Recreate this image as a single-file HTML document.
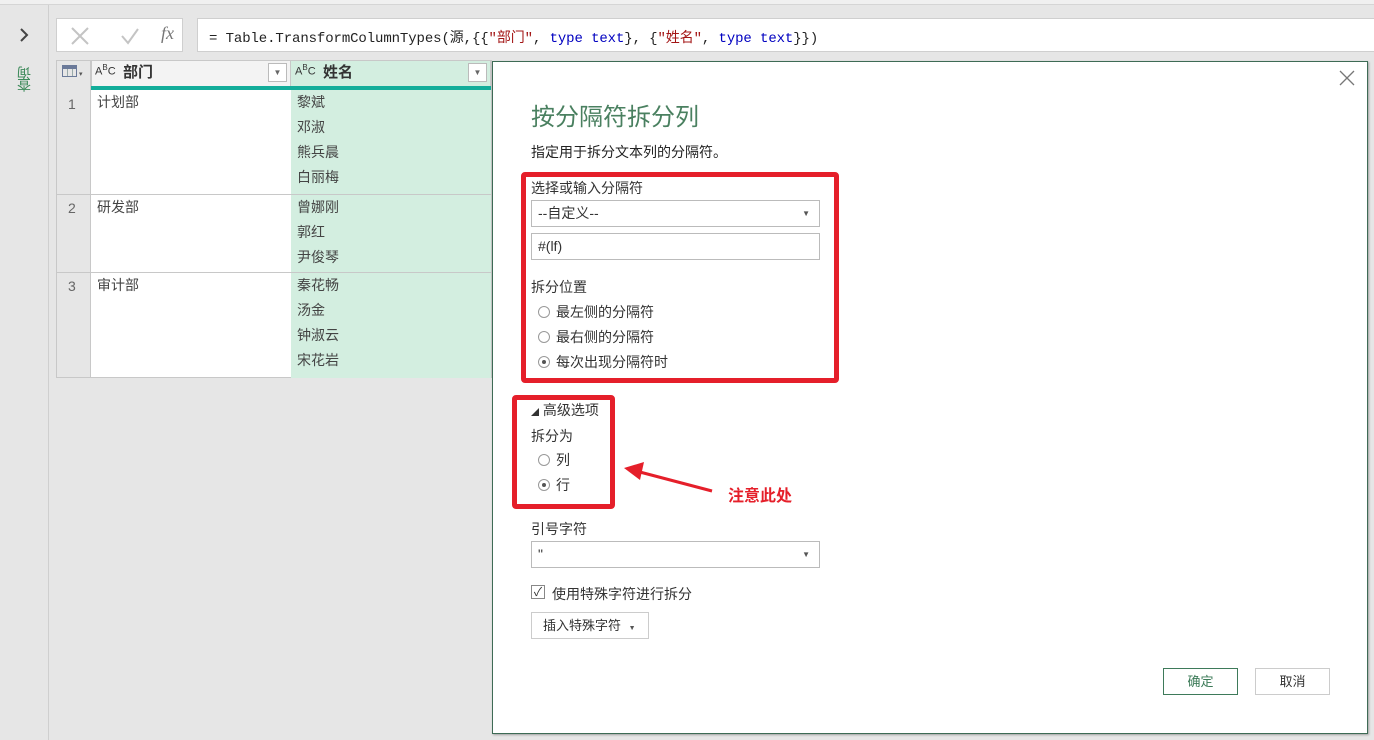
<!DOCTYPE html>
<html><head><meta charset="utf-8"><style>
*{margin:0;padding:0;box-sizing:border-box}
body{width:1374px;height:740px;overflow:hidden;background:#e6e6e6;font-family:"Liberation Sans","Noto Sans CJK SC",sans-serif;font-size:14px;color:#333;position:relative}
.a{position:absolute}
.cell{position:absolute;line-height:25px;font-size:14px;color:#444}
.radio{display:inline-block;width:12px;height:12px;border:1px solid #999;border-radius:50%;vertical-align:-1px;margin-right:6px;position:relative;background:#fff}
.radio.on::after{content:"";position:absolute;left:3px;top:3px;width:4px;height:4px;border-radius:50%;background:#555}
.red{position:absolute;border:5px solid #e51f2a;border-radius:4px}
</style></head><body>
<div class="a" style="left:0;top:0;width:1374px;height:5px;background:#f0f0f0;border-bottom:1px solid #d5d5d5"></div>
<div class="a" style="left:0;top:5px;width:49px;height:735px;background:#e6e6e6;border-right:1px solid #cfcfcf"></div>
<svg class="a" style="left:18px;top:27px" width="12" height="16"><path d="M3 2 L9 8 L3 14" stroke="#444" stroke-width="2" fill="none"/></svg>
<div class="a" style="left:14px;top:68px;width:20px;font-size:14px;color:#3d8a5a;writing-mode:vertical-rl;transform:rotate(180deg);letter-spacing:-2px">查询</div>
<!-- formula bar -->
<div class="a" style="left:56px;top:18px;width:127px;height:34px;background:#fff;border:1px solid #cfcfcf"></div>
<svg class="a" style="left:70px;top:26px" width="120" height="20"><path d="M2 2 L18 18 M18 2 L2 18" stroke="#c4c4c4" stroke-width="2"/><path d="M52 10 L58 17 L68 3" stroke="#c4c4c4" stroke-width="2" fill="none"/></svg>
<div class="a" style="left:161px;top:23px;font-size:18px;color:#777;font-family:'Liberation Serif',serif;font-style:italic">fx</div>
<div class="a" style="left:197px;top:18px;width:1177px;height:34px;background:#fff;border:1px solid #cfcfcf;border-right:none"></div>
<div class="a" style="left:209px;top:27px;font-family:'Liberation Mono','Noto Sans CJK SC',monospace;font-size:14px;color:#222;white-space:pre;letter-spacing:-0.1px">= Table.TransformColumnTypes(源,{{<span style="color:#a31515">"部门"</span>, <span style="color:#0000c0">type text</span>}, {<span style="color:#a31515">"姓名"</span>, <span style="color:#0000c0">type text</span>}})</div>
<!-- table -->
<div class="a" style="left:56px;top:60px;width:436px;height:318px;background:#fff;border:1px solid #c8c8c8"></div>
<div class="a" style="left:56px;top:60px;width:35px;height:318px;background:#e6e6e6;border:1px solid #c8c8c8"></div>
<div class="a" style="left:91px;top:60px;width:200px;height:27px;background:#f3f3f3;border:1px solid #c8c8c8"></div>
<div class="a" style="left:291px;top:60px;width:200px;height:318px;background:#d3eee0"></div>
<div class="a" style="left:291px;top:60px;width:200px;height:27px;border:1px solid #c8c8c8;border-left:none"></div>
<div class="a" style="left:91px;top:86px;width:400px;height:4px;background:#13ad9a"></div>
<div class="a" style="left:62px;top:65px;width:15px;height:12px;border:1px solid #6b7a99;background:linear-gradient(#6b7a99 0 3px,transparent 3px),repeating-linear-gradient(90deg,transparent 0 4px,#9aa 4px 5px)"></div>
<div class="a" style="left:79px;top:70px;font-size:7px;color:#555">▾</div>
<div class="a" style="left:95px;top:63px;font-size:11px;color:#333">A<sup style="font-size:8px">B</sup>C</div>
<div class="a" style="left:123px;top:61px;font-size:15px;font-weight:bold;color:#333">部门</div>
<div class="a" style="left:268px;top:63px;width:19px;height:19px;border:1px solid #bbb;background:#fff;font-size:8px;text-align:center;line-height:17px;color:#666">▼</div>
<div class="a" style="left:295px;top:63px;font-size:11px;color:#333">A<sup style="font-size:8px">B</sup>C</div>
<div class="a" style="left:323px;top:61px;font-size:15px;font-weight:bold;color:#333">姓名</div>
<div class="a" style="left:468px;top:63px;width:19px;height:19px;border:1px solid #bbb;background:#fff;font-size:8px;text-align:center;line-height:17px;color:#666">▼</div>
<div class="a" style="left:56px;top:194px;width:436px;height:1px;background:#c8c8c8"></div>
<div class="a" style="left:56px;top:272px;width:436px;height:1px;background:#c8c8c8"></div>
<div class="cell" style="left:68px;top:92px;color:#666">1</div>
<div class="cell" style="left:68px;top:196px;color:#666">2</div>
<div class="cell" style="left:68px;top:274px;color:#666">3</div>
<div class="cell" style="left:97px;top:90px">计划部</div>
<div class="cell" style="left:97px;top:195px">研发部</div>
<div class="cell" style="left:97px;top:273px">审计部</div>
<div class="cell" style="left:297px;top:90px">黎斌<br>邓淑<br>熊兵晨<br>白丽梅</div>
<div class="cell" style="left:297px;top:195px">曾娜刚<br>郭红<br>尹俊琴</div>
<div class="cell" style="left:297px;top:273px">秦花畅<br>汤金<br>钟淑云<br>宋花岩</div>
<!-- dialog -->
<div class="a" style="left:492px;top:61px;width:876px;height:673px;background:#fff;border:1px solid #3e6b55;box-shadow:1px 1px 2px rgba(0,0,0,.3)"></div>
<svg class="a" style="left:1339px;top:70px" width="16" height="16"><path d="M1 1 L15 15 M15 1 L1 15" stroke="#777" stroke-width="1.3"/></svg>
<div class="a" style="left:531px;top:97px;font-size:24px;color:#4a8060">按分隔符拆分列</div>
<div class="a" style="left:531px;top:142px;font-size:14px;color:#222">指定用于拆分文本列的分隔符。</div>
<div class="red" style="left:521px;top:172px;width:318px;height:211px"></div>
<div class="a" style="left:531px;top:178px;color:#333">选择或输入分隔符</div>
<div class="a" style="left:531px;top:200px;width:289px;height:27px;border:1px solid #bbb;background:#fff;line-height:25px;padding-left:6px;color:#333">--自定义--<span style="position:absolute;right:9px;font-size:8px;color:#555">▼</span></div>
<div class="a" style="left:531px;top:233px;width:289px;height:27px;border:1px solid #bbb;background:#fff;line-height:25px;padding-left:6px;color:#333">#(lf)</div>
<div class="a" style="left:531px;top:277px;color:#333">拆分位置</div>
<div class="a" style="left:538px;top:302px;color:#333"><span class="radio"></span>最左侧的分隔符</div>
<div class="a" style="left:538px;top:327px;color:#333"><span class="radio"></span>最右侧的分隔符</div>
<div class="a" style="left:538px;top:352px;color:#333"><span class="radio on"></span>每次出现分隔符时</div>
<div class="red" style="left:512px;top:395px;width:103px;height:114px"></div>
<div class="a" style="left:531px;top:400px;color:#333"><span style="font-size:8px">◢</span> 高级选项</div>
<div class="a" style="left:531px;top:426px;color:#333">拆分为</div>
<div class="a" style="left:538px;top:450px;color:#333"><span class="radio"></span>列</div>
<div class="a" style="left:538px;top:475px;color:#333"><span class="radio on"></span>行</div>
<svg class="a" style="left:620px;top:460px" width="95" height="36"><line x1="92" y1="31" x2="16" y2="11" stroke="#e51f2a" stroke-width="3"/><polygon points="4,8 24,2 20,20" fill="#e51f2a"/></svg>
<div class="a" style="left:728px;top:482px;font-size:16px;font-weight:bold;color:#e51f2a">注意此处</div>
<div class="a" style="left:531px;top:519px;color:#333">引号字符</div>
<div class="a" style="left:531px;top:541px;width:289px;height:27px;border:1px solid #bbb;background:#fff;line-height:25px;padding-left:6px;color:#333">"<span style="position:absolute;right:9px;font-size:8px;color:#555">▼</span></div>
<div class="a" style="left:531px;top:585px;width:14px;height:14px;border:1px solid #888;font-size:12px;line-height:12px;text-align:center;color:#333">✓</div>
<div class="a" style="left:552px;top:584px;color:#333">使用特殊字符进行拆分</div>
<div class="a" style="left:531px;top:612px;width:118px;height:27px;border:1px solid #ccc;background:#fff;line-height:25px;padding-left:11px;font-size:13px;color:#333">插入特殊字符 <span style="font-size:7px;color:#555;margin-left:4px">▼</span></div>
<div class="a" style="left:1163px;top:668px;width:75px;height:27px;border:1px solid #3e7a5a;text-align:center;line-height:25px;font-size:13px;color:#3b7a57">确定</div>
<div class="a" style="left:1255px;top:668px;width:75px;height:27px;border:1px solid #ccc;text-align:center;line-height:25px;font-size:13px;color:#333">取消</div>
</body></html>
